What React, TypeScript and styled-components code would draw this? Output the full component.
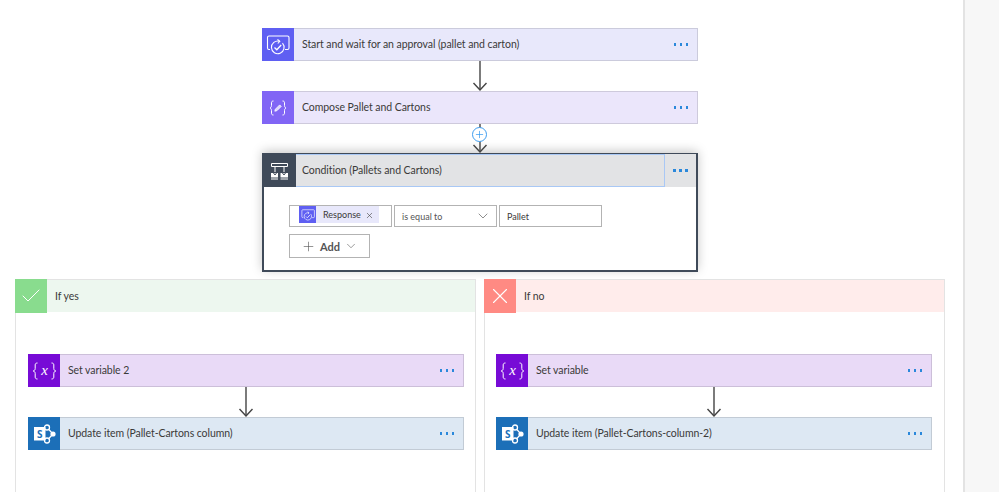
import React from 'react';
import styled, { createGlobalStyle } from 'styled-components';
import { Plus, ChevronDown, X, Check } from 'lucide-react';

const GlobalStyle = createGlobalStyle`
  html, body {
    margin: 0;
    padding: 0;
    height: 492px;
    overflow: hidden;
    background: #fff;
    font-family: Lato, "Open Sans", "Liberation Sans", sans-serif;
    color: #3b3a39;
  }
`;

const Page = styled.div`
  display: flex;
  width: 999px;
  height: 492px;
  overflow: hidden;
`;

const Canvas = styled.main`
  width: 963px;
  flex: none;
  padding-top: 28px;
  box-sizing: border-box;
  display: flex;
  flex-direction: column;
  align-items: flex-start;
`;

const Sidebar = styled.aside`
  flex: 1;
  background: #f7f7f7;
  border-left: 2px solid #e3e3e3;
`;

const TopColumn = styled.div`
  margin-left: 262px;
  width: 436px;
  display: flex;
  flex-direction: column;
`;

const Card = styled.div<{ $bg: string }>`
  display: flex;
  align-items: stretch;
  height: 33px;
  box-sizing: border-box;
  background: ${(p) => p.$bg};
  border: 1px solid rgba(0, 0, 0, 0.12);
`;

const IconBox = styled.div<{ $bg: string }>`
  width: 32px;
  flex: none;
  margin: -1px 0 -1px -1px;
  background: ${(p) => p.$bg};
  display: flex;
  align-items: center;
  justify-content: center;
`;

const Title = styled.span`
  flex: 1;
  align-self: center;
  padding: 0 0 1px 8px;
  font-size: 10.5px;
  letter-spacing: -0.07px;
  white-space: nowrap;
`;

const Dots = styled.div`
  width: 32px;
  flex: none;
  display: flex;
  align-items: center;
  justify-content: center;
  gap: 3.5px;
  box-sizing: border-box;
`;

const Dot = styled.i`
  width: 2.5px;
  height: 2.5px;
  background: #2a88db;
  display: block;
`;

const Connector = styled.div<{ $h: number }>`
  position: relative;
  height: ${(p) => p.$h}px;
  display: flex;
  justify-content: center;
`;

const PlusButton = styled.div`
  position: absolute;
  left: 50%;
  top: 3px;
  width: 15px;
  height: 15px;
  margin-left: -8px;
  box-sizing: border-box;
  border: 1px solid #3d9df0;
  border-radius: 50%;
  background: #fff;
  display: flex;
  align-items: center;
  justify-content: center;
  color: #2f96ef;
`;

const Condition = styled.section`
  height: 119px;
  box-sizing: border-box;
  border: 2px solid #3f4a59;
  border-top-width: 1px;
  background: #fff;
  box-shadow: 0 -2px 10px rgba(0, 0, 0, 0.22);
`;

const ConditionHeader = styled.div`
  display: flex;
  height: 33px;
  margin-left: -1px;
  background: #e2e3e5;
`;

const ConditionIcon = styled(IconBox)`
  margin: 0;
  width: 33px;
`;

const ConditionTitle = styled(Title)`
  align-self: stretch;
  display: flex;
  align-items: center;
  border: 1px solid #a9c8f5;
  border-left: none;
  padding: 0 0 1px 6px;
`;

const ConditionMenu = styled(Dots)`
  width: 31px;
`;

const ConditionBody = styled.div`
  padding: 18px 0 0 25px;
  display: flex;
  flex-direction: column;
  gap: 7px;
`;

const ExpressionRow = styled.div`
  display: flex;
  gap: 2px;
`;

const Field = styled.div<{ $w: number }>`
  width: ${(p) => p.$w}px;
  height: 22px;
  box-sizing: border-box;
  border: 1px solid #b3b3b3;
  display: flex;
  align-items: center;
  font-size: 9px;
  padding-left: 7px;
  background: #fff;
`;

const TokenField = styled(Field)`
  align-items: flex-start;
  padding-left: 9px;
`;

const Token = styled.div`
  display: flex;
  align-items: center;
  height: 17px;
  background: #e8e8fb;
  font-size: 9px;
`;

const TokenIcon = styled.div`
  width: 17px;
  height: 17px;
  background: #5f5ff2;
  display: flex;
  align-items: center;
  justify-content: center;
  margin-right: 7px;
`;

const TokenClose = styled.span`
  display: flex;
  margin: 1px 5px 0 4px;
`;

const SelectField = styled(Field)`
  justify-content: space-between;
  padding-right: 5px;
  color: #555;
`;

const AddButton = styled.button`
  width: 81px;
  height: 24px;
  box-sizing: border-box;
  border: 1px solid #b3b3b3;
  background: #fff;
  display: flex;
  align-items: center;
  justify-content: center;
  gap: 4px;
  padding: 0;
  font-family: inherit;
  font-size: 11px;
  font-weight: 700;
  color: #555;
`;

const Branches = styled.div`
  display: flex;
  gap: 8px;
  margin: 7px 0 0 15px;
  flex: 1;
`;

const Branch = styled.section<{ $w: number }>`
  width: ${(p) => p.$w}px;
  box-sizing: border-box;
  border: 1px solid #e3e3e3;
  border-bottom: none;
`;

const BranchHeader = styled.div<{ $bg: string }>`
  display: flex;
  height: 32px;
  background: ${(p) => p.$bg};
`;

const BranchBody = styled.div<{ $left: number }>`
  padding: 42px 0 0 ${(p) => p.$left}px;
  width: 436px;
  display: flex;
  flex-direction: column;
`;

const ApprovalIcon = ({ size = 24 }: { size?: number }) => (
  <svg width={size} height={size} viewBox="0 0 24 24" fill="none" stroke="#fff" strokeWidth="1.1">
    <path d="M4 16.500H3a1.500 1.500 0 0 1-1.500-1.500V4.500A1.500 1.500 0 0 1 3 3h18.500A1.500 1.500 0 0 1 23 4.500V15a1.500 1.500 0 0 1-1.500 1.500H19" />
    <path d="M16.500 10.200a6.300 6.300 0 1 1-3-1.900" />
    <path d="M8.500 14.500l2.300 2.300 4.400-4.800" strokeWidth="1.300" />
    <path d="M11.500 6.300l2.300 2-2 2.200" />
  </svg>
);

const ComposeIcon = () => (
  <svg width="18" height="16" viewBox="0 0 18 16" fill="none" stroke="#fff" strokeWidth="1">
    <path d="M4.500 1c-1.600 0-2 .7-2 1.900v2.700c0 1-.5 1.900-1.500 2.400 1 .5 1.500 1.400 1.500 2.400v2.700c0 1.200.4 1.900 2 1.900" />
    <path d="M13.500 1c1.600 0 2 .7 2 1.900v2.700c0 1 .5 1.900 1.500 2.400-1 .5-1.500 1.400-1.500 2.400v2.700c0 1.200-.4 1.900-2 1.900" />
    <path d="M5.800 11.200l.6-2 4.300-4.300 1.500 1.500-4.300 4.300z" fill="#dcd3fc" strokeWidth="0.800" />
  </svg>
);

const ConditionGlyph = () => (
  <svg width="19" height="18" viewBox="0 0 19 18" fill="none" stroke="#fff" strokeWidth="1">
    <path d="M1.500 1.500h16v3h-16zM5 4.500v5.500M14 4.500v5.500" />
    <path d="M1 11h7v4.500H1zM10.500 11H18v4.500h-7.500z" fill="#fff" stroke="none" />
    <path d="M3.500 11L5 13l1.500-2M12.500 11l1.500 2 1.500-2" stroke="#3f4a59" />
    <path d="M1 17h7M10.500 17H18" />
  </svg>
);

const VariableIcon = () => (
  <svg width="25" height="18" viewBox="0 0 25 18" fill="none" stroke="#fff" strokeWidth="1">
    <path d="M5.500 1C3.800 1 3.200 1.800 3.200 3v3.600C3.200 7.800 2.500 8.600 1.200 9c1.300.4 2 1.200 2 2.400V15c0 1.200.6 2 2.300 2" />
    <path d="M19.500 1c1.700 0 2.300.8 2.300 2v3.600c0 1.200.7 2 2 2.400-1.300.4-2 1.200-2 2.400V15c0 1.200-.6 2-2.300 2" />
    <text
      x="12.500"
      y="12.500"
      fontSize="15"
      fontStyle="italic"
      fontFamily="Liberation Serif, serif"
      fill="#fff"
      stroke="none"
      textAnchor="middle"
    >
      x
    </text>
  </svg>
);

const SharePointIcon = () => (
  <svg width="25" height="20" viewBox="0 0 25 20">
    <path d="M15 3.500L21 10L15 16.500" fill="none" stroke="#fff" strokeWidth="1.200" />
    <circle cx="15" cy="3.500" r="2.500" fill="#1c6fb8" stroke="#fff" strokeWidth="1.300" />
    <circle cx="15" cy="16.500" r="2.500" fill="#1c6fb8" stroke="#fff" strokeWidth="1.300" />
    <circle cx="21" cy="10" r="2.600" fill="#fff" />
    <path d="M2 3h11.500v13.500H2z" fill="#fff" />
    <text
      x="7.700"
      y="13.500"
      fontSize="10"
      fontWeight="700"
      fontFamily="Open Sans, sans-serif"
      fill="#1c6fb8"
      textAnchor="middle"
    >
      S
    </text>
  </svg>
);

const Arrow = ({ h }: { h: number }) => (
  <svg width="16" height={h} viewBox={`0 0 16 ${h}`} fill="none" stroke="#444" strokeWidth="1.400">
    <path d={`M8 0V${h - 1}`} />
    <path d={`M1.500 ${h - 8}L8 ${h - 1}L14.500 ${h - 8}`} />
  </svg>
);

const MoreDots = () => (
  <Dots>
    <Dot />
    <Dot />
    <Dot />
  </Dots>
);

interface StepProps {
  title: string;
  bg: string;
  iconBg: string;
  icon: React.ReactNode;
}

const Step: React.FC<StepProps> = ({ title, bg, iconBg, icon }) => (
  <Card $bg={bg}>
    <IconBox $bg={iconBg}>{icon}</IconBox>
    <Title>{title}</Title>
    <MoreDots />
  </Card>
);

const varColors = { bg: '#e9daf7', iconBg: '#770bd6' };
const spColors = { bg: '#dde8f3', iconBg: '#1c6fb8' };

const App: React.FC = () => (
  <Page>
    <GlobalStyle />
    <Canvas>
      <TopColumn>
        <Step
          title="Start and wait for an approval (pallet and carton)"
          bg="#e8e8fb"
          iconBg="#5f5ff2"
          icon={<ApprovalIcon />}
        />
        <Connector $h={30}>
          <Arrow h={30} />
        </Connector>
        <Step title="Compose Pallet and Cartons" bg="#ebe6fb" iconBg="#8165f5" icon={<ComposeIcon />} />
        <Connector $h={29}>
          <Arrow h={29} />
          <PlusButton>
            <Plus size={11} strokeWidth={1.500} />
          </PlusButton>
        </Connector>
        <Condition>
          <ConditionHeader>
            <ConditionIcon $bg="#3f4a59">
              <ConditionGlyph />
            </ConditionIcon>
            <ConditionTitle>Condition (Pallets and Cartons)</ConditionTitle>
            <ConditionMenu>
              <Dot />
              <Dot />
              <Dot />
            </ConditionMenu>
          </ConditionHeader>
          <ConditionBody>
            <ExpressionRow>
              <TokenField $w={103}>
                <Token>
                  <TokenIcon>
                    <ApprovalIcon size={14} />
                  </TokenIcon>
                  Response
                  <TokenClose>
                    <X size={9} strokeWidth={1.500} />
                  </TokenClose>
                </Token>
              </TokenField>
              <SelectField $w={103}>
                is equal to
                <ChevronDown size={16} strokeWidth={1} />
              </SelectField>
              <Field $w={103}>Pallet</Field>
            </ExpressionRow>
            <AddButton>
              <Plus size={15} strokeWidth={1} />
              Add
              <ChevronDown size={14} strokeWidth={1} />
            </AddButton>
          </ConditionBody>
        </Condition>
      </TopColumn>
      <Branches>
        <Branch $w={461}>
          <BranchHeader $bg="#edf7ef">
            <IconBox $bg="#89dc8e">
              <Check size={24} color="#fff" strokeWidth={1} />
            </IconBox>
            <Title>If yes</Title>
          </BranchHeader>
          <BranchBody $left={12}>
            <Step title="Set variable 2" {...varColors} icon={<VariableIcon />} />
            <Connector $h={30}>
              <Arrow h={30} />
            </Connector>
            <Step title="Update item (Pallet-Cartons column)" {...spColors} icon={<SharePointIcon />} />
          </BranchBody>
        </Branch>
        <Branch $w={461}>
          <BranchHeader $bg="#ffeceb">
            <IconBox $bg="#ff8a83">
              <X size={26} color="#fff" strokeWidth={1} />
            </IconBox>
            <Title>If no</Title>
          </BranchHeader>
          <BranchBody $left={11}>
            <Step title="Set variable" {...varColors} icon={<VariableIcon />} />
            <Connector $h={30}>
              <Arrow h={30} />
            </Connector>
            <Step title="Update item (Pallet-Cartons-column-2)" {...spColors} icon={<SharePointIcon />} />
          </BranchBody>
        </Branch>
      </Branches>
    </Canvas>
    <Sidebar />
  </Page>
);

export default App;
